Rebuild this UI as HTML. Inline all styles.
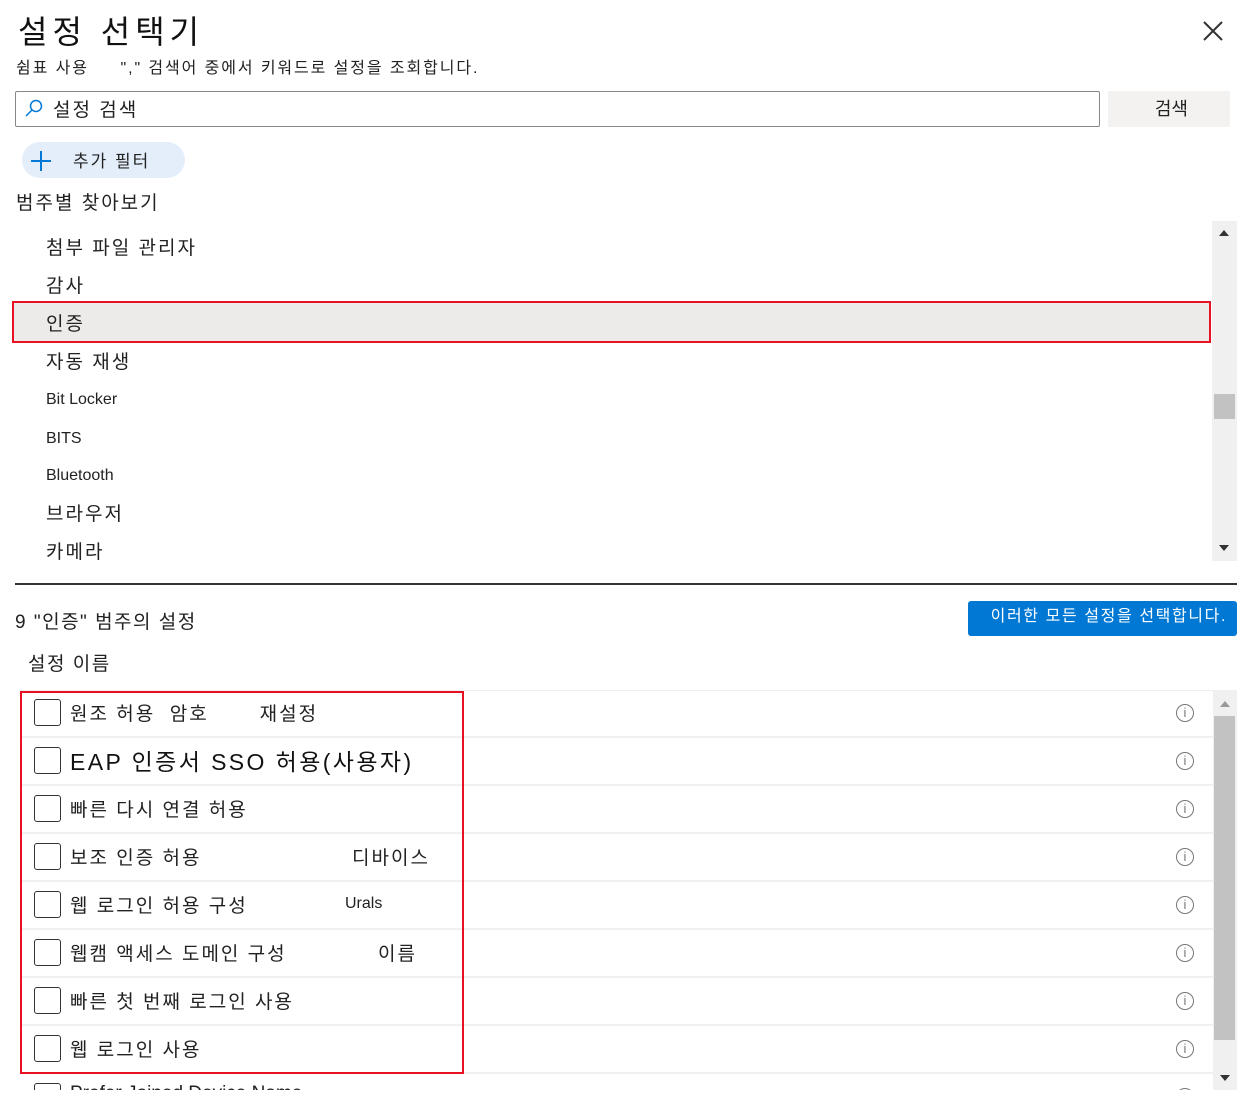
<!DOCTYPE html>
<html><head><meta charset="utf-8"><style>
*{margin:0;padding:0;box-sizing:border-box}
body{width:1243px;height:1099px;background:#fff;font-family:"Liberation Sans","Noto Sans CJK KR",sans-serif;color:#222;position:relative;overflow:hidden}
.a{position:absolute;white-space:nowrap}
.cat{position:absolute;left:46px;font-size:19px;color:#222;letter-spacing:2px}
.row{position:absolute;left:20px;width:1193px;height:48px;border-bottom:2px solid #f0f0f0}
.cb{position:absolute;left:14px;top:9px;width:27px;height:27px;border:1.5px solid #333;border-radius:3px}
.rt{position:absolute;left:50px;top:9px;font-size:19px;color:#222;white-space:nowrap;letter-spacing:2px}
.info{position:absolute;left:1156px;top:14px;width:18px;height:18px;border:1.5px solid #777;border-radius:50%;font-size:13px;line-height:15px;text-align:center;color:#777;font-family:"Liberation Sans",sans-serif}
</style></head><body>
<div class="a" style="left:18px;top:7px;font-size:32px;color:#111;letter-spacing:5px">설정 선택기</div>
<svg class="a" style="left:1202px;top:20px" width="22" height="22"><path d="M2 2L20 20M20 2L2 20" stroke="#333" stroke-width="2"/></svg>
<div class="a" style="left:16px;top:54px;font-size:16px;letter-spacing:1.9px">쉼표 사용 &nbsp; &nbsp; "," 검색어 중에서 키워드로 설정을 조회합니다.</div>
<div class="a" style="left:15px;top:91px;width:1085px;height:36px;border:1px solid #8a8886;border-radius:2px"></div>
<svg class="a" style="left:24px;top:98px" width="20" height="20"><circle cx="12" cy="8" r="5.5" fill="none" stroke="#0078d4" stroke-width="1.5"/><path d="M8 12L2 18" stroke="#0078d4" stroke-width="1.5"/></svg>
<div class="a" style="left:53px;top:95px;font-size:19px;letter-spacing:2px">설정 검색</div>
<div class="a" style="left:1108px;top:91px;width:122px;height:36px;background:#f3f2f1;border-radius:2px;font-size:18px;text-align:right;padding-right:42px;line-height:36px">검색</div>
<div class="a" style="left:22px;top:142px;width:163px;height:36px;background:#e3eefa;border-radius:18px"></div>
<svg class="a" style="left:30px;top:150px" width="22" height="22"><path d="M11 1V21M1 11H21" stroke="#0078d4" stroke-width="2"/></svg>
<div class="a" style="left:73px;top:147px;font-size:17px;letter-spacing:2px">추가 필터</div>
<div class="a" style="left:16px;top:188px;font-size:19px;letter-spacing:2px">범주별 찾아보기</div>
<div class="a" style="left:14px;top:303px;width:1195px;height:38px;background:#edebe9"></div>
<div class="a" style="left:12px;top:301px;width:1199px;height:42px;border:2px solid #e81123"></div>
<div class="cat" style="top:233px">첨부 파일 관리자</div>
<div class="cat" style="top:271px">감사</div>
<div class="cat" style="top:309px">인증</div>
<div class="cat" style="top:347px">자동 재생</div>
<div class="cat" style="top:391px;font-size:16px;letter-spacing:0">Bit Locker</div>
<div class="cat" style="top:430px;font-size:16px;letter-spacing:0">BITS</div>
<div class="cat" style="top:467px;font-size:16px;letter-spacing:0">Bluetooth</div>
<div class="cat" style="top:499px">브라우저</div>
<div class="cat" style="top:537px">카메라</div>
<div class="a" style="left:1212px;top:221px;width:25px;height:340px;background:#f0f0f0"></div>
<div class="a" style="left:1214px;top:394px;width:21px;height:25px;background:#c2c2c2"></div>
<svg class="a" style="left:1218px;top:229px" width="12" height="8"><path d="M1 7L6 1L11 7Z" fill="#333"/></svg>
<svg class="a" style="left:1218px;top:544px" width="12" height="8"><path d="M1 1L6 7L11 1Z" fill="#333"/></svg>
<div class="a" style="left:15px;top:583px;width:1222px;height:2px;background:#333"></div>
<div class="a" style="left:15px;top:607px;font-size:19px;letter-spacing:1.5px">9 "인증" 범주의 설정</div>
<div class="a" style="left:968px;top:601px;width:269px;height:35px;background:#0078d4;border-radius:3px;color:#fff;font-size:16px;line-height:31px;text-align:right;padding-right:10px;letter-spacing:1.6px">이러한 모든 설정을 선택합니다.</div>
<div class="a" style="left:28px;top:649px;font-size:19px;letter-spacing:1.5px">설정 이름</div>
<div class="a" style="left:20px;top:690px;width:1193px;height:1px;background:#eee"></div>
<div class="a" style="left:0;top:690px;width:1243px;height:400px;overflow:hidden">
<div class="row" style="top:0"><div class="cb"></div><div class="rt">원조 허용 &nbsp;암호 &nbsp; &nbsp; &nbsp; 재설정</div><div class="info">i</div></div>
<div class="row" style="top:48px"><div class="cb"></div><div class="rt" style="font-size:23px;top:5px;color:#111;letter-spacing:2.4px">EAP 인증서 SSO 허용(사용자)</div><div class="info">i</div></div>
<div class="row" style="top:96px"><div class="cb"></div><div class="rt">빠른 다시 연결 허용</div><div class="info">i</div></div>
<div class="row" style="top:144px"><div class="cb"></div><div class="rt">보조 인증 허용<span style="position:absolute;left:282px">디바이스</span></div><div class="info">i</div></div>
<div class="row" style="top:192px"><div class="cb"></div><div class="rt">웹 로그인 허용 구성<span style="position:absolute;left:275px;top:4px;font-size:16px;letter-spacing:0">Urals</span></div><div class="info">i</div></div>
<div class="row" style="top:240px"><div class="cb"></div><div class="rt">웹캠 액세스 도메인 구성<span style="position:absolute;left:308px">이름</span></div><div class="info">i</div></div>
<div class="row" style="top:288px"><div class="cb"></div><div class="rt">빠른 첫 번째 로그인 사용</div><div class="info">i</div></div>
<div class="row" style="top:336px"><div class="cb"></div><div class="rt">웹 로그인 사용</div><div class="info">i</div></div>
<div class="row" style="top:384px"><div class="cb"></div><div class="rt" style="letter-spacing:0">Prefer Joined Device Name</div><div class="info">i</div></div>
</div>
<div class="a" style="left:20px;top:691px;width:444px;height:383px;border:2px solid #e81123"></div>
<div class="a" style="left:1213px;top:690px;width:24px;height:400px;background:#f0f0f0"></div>
<div class="a" style="left:1214px;top:716px;width:21px;height:324px;background:#c2c2c2"></div>
<svg class="a" style="left:1219px;top:700px" width="12" height="8"><path d="M1 7L6 1L11 7Z" fill="#999"/></svg>
<svg class="a" style="left:1219px;top:1074px" width="12" height="8"><path d="M1 1L6 7L11 1Z" fill="#333"/></svg>
</body></html>
